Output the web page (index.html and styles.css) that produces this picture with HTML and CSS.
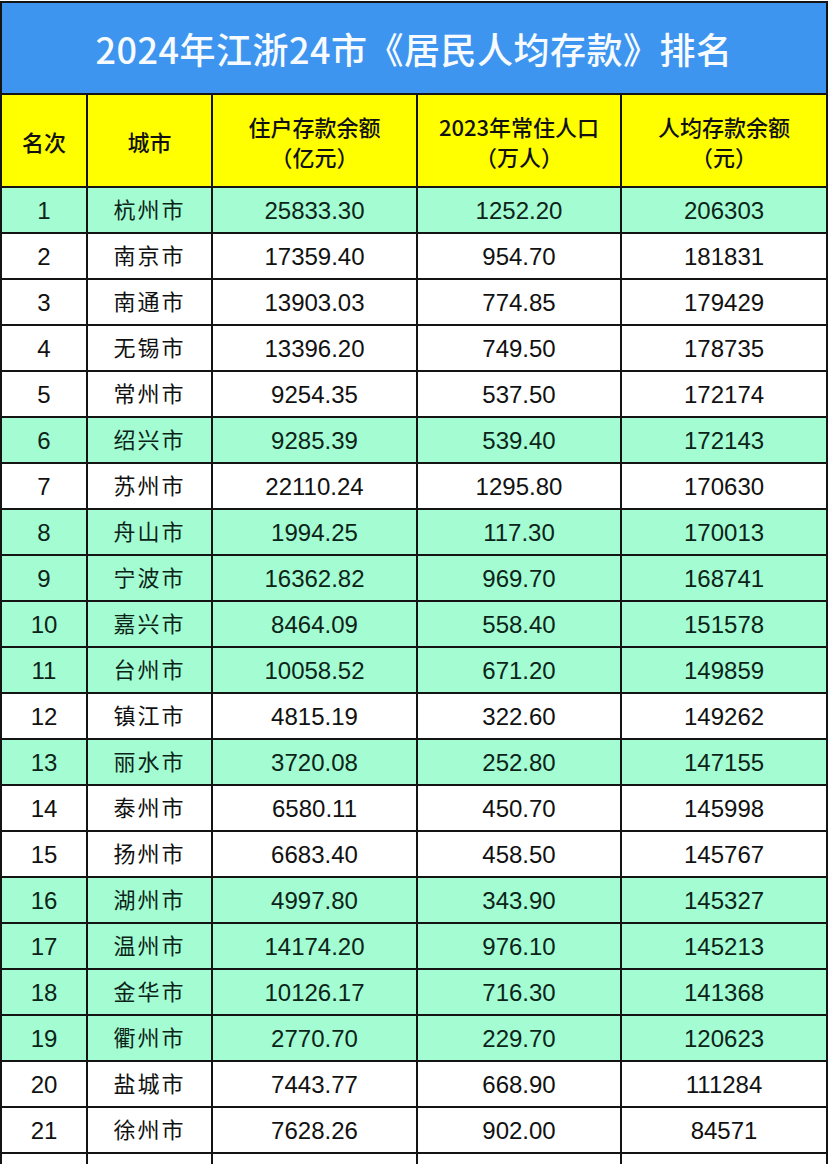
FILE: index.html
```html
<!DOCTYPE html>
<html lang="zh">
<head>
<meta charset="utf-8">
<title>2024年江浙24市《居民人均存款》排名</title>
<link rel="stylesheet" href="styles.css">
</head>
<body>
<table class="rank">
  <colgroup>
    <col class="c1"><col class="c2"><col class="c3"><col class="c4"><col class="c5">
  </colgroup>
  <thead>
    <tr class="title-row"><th colspan="5" class="title">2024年江浙24市《居民人均存款》排名</th></tr>
    <tr class="head-row">
      <th>名次</th>
      <th>城市</th>
      <th>住户存款余额<br>（亿元）</th>
      <th>2023年常住人口<br>（万人）</th>
      <th>人均存款余额<br>（元）</th>
    </tr>
  </thead>
  <tbody>
    <tr class="zj"><td>1</td><td class="city">杭州市</td><td>25833.30</td><td>1252.20</td><td>206303</td></tr>
    <tr><td>2</td><td class="city">南京市</td><td>17359.40</td><td>954.70</td><td>181831</td></tr>
    <tr><td>3</td><td class="city">南通市</td><td>13903.03</td><td>774.85</td><td>179429</td></tr>
    <tr><td>4</td><td class="city">无锡市</td><td>13396.20</td><td>749.50</td><td>178735</td></tr>
    <tr><td>5</td><td class="city">常州市</td><td>9254.35</td><td>537.50</td><td>172174</td></tr>
    <tr class="zj"><td>6</td><td class="city">绍兴市</td><td>9285.39</td><td>539.40</td><td>172143</td></tr>
    <tr><td>7</td><td class="city">苏州市</td><td>22110.24</td><td>1295.80</td><td>170630</td></tr>
    <tr class="zj"><td>8</td><td class="city">舟山市</td><td>1994.25</td><td>117.30</td><td>170013</td></tr>
    <tr class="zj"><td>9</td><td class="city">宁波市</td><td>16362.82</td><td>969.70</td><td>168741</td></tr>
    <tr class="zj"><td>10</td><td class="city">嘉兴市</td><td>8464.09</td><td>558.40</td><td>151578</td></tr>
    <tr class="zj"><td>11</td><td class="city">台州市</td><td>10058.52</td><td>671.20</td><td>149859</td></tr>
    <tr><td>12</td><td class="city">镇江市</td><td>4815.19</td><td>322.60</td><td>149262</td></tr>
    <tr class="zj"><td>13</td><td class="city">丽水市</td><td>3720.08</td><td>252.80</td><td>147155</td></tr>
    <tr><td>14</td><td class="city">泰州市</td><td>6580.11</td><td>450.70</td><td>145998</td></tr>
    <tr><td>15</td><td class="city">扬州市</td><td>6683.40</td><td>458.50</td><td>145767</td></tr>
    <tr class="zj"><td>16</td><td class="city">湖州市</td><td>4997.80</td><td>343.90</td><td>145327</td></tr>
    <tr class="zj"><td>17</td><td class="city">温州市</td><td>14174.20</td><td>976.10</td><td>145213</td></tr>
    <tr class="zj"><td>18</td><td class="city">金华市</td><td>10126.17</td><td>716.30</td><td>141368</td></tr>
    <tr class="zj"><td>19</td><td class="city">衢州市</td><td>2770.70</td><td>229.70</td><td>120623</td></tr>
    <tr><td>20</td><td class="city">盐城市</td><td>7443.77</td><td>668.90</td><td>111284</td></tr>
    <tr><td>21</td><td class="city">徐州市</td><td>7628.26</td><td>902.00</td><td>84571</td></tr>
    <tr><td></td><td class="city"></td><td></td><td></td><td></td></tr>
  </tbody>
</table>
</body>
</html>
```

FILE: styles.css
```css
html, body {
  margin: 0;
  padding: 0;
  background: #ffffff;
  overflow: hidden;
}
body {
  padding-top: 1px;
  font-family: "Liberation Sans", "Noto Sans CJK SC", sans-serif;
  color: #111111;
}
.rank {
  border-collapse: collapse;
  width: 826px;
  table-layout: fixed;
}
.c1 { width: 86px; }
.c2 { width: 125px; }
.c3 { width: 205px; }
.c4 { width: 204px; }
.c5 { width: 206px; }
.rank th, .rank td {
  border: 2px solid #141414;
  text-align: center;
  vertical-align: middle;
  padding: 0;
}
.title {
  background: #3d95ef;
  color: #f7fbff;
  font-family: "Noto Sans CJK SC", sans-serif;
  font-weight: 500;
  font-size: 36px;
  height: 90px;
  letter-spacing: 0.5px;
}
.head-row th {
  background: #ffff00;
  font-family: "Noto Sans CJK SC", sans-serif;
  font-weight: 500;
  font-size: 22px;
  line-height: 30px;
  height: 91px;
  color: #111111;
}
.rank td {
  height: 44px;
  font-size: 24px;
  line-height: 28px;
  padding-top: 2px;
  height: 42px;
  background: #ffffff;
}
.rank tr.zj td {
  background: #a3fcd2;
  color: #0c2418;
}
.rank td.city {
  font-family: "Noto Sans CJK SC", sans-serif;
  font-size: 22px;
  letter-spacing: 2px;
  padding-top: 0;
  padding-bottom: 4px;
  height: 40px;
}
```
